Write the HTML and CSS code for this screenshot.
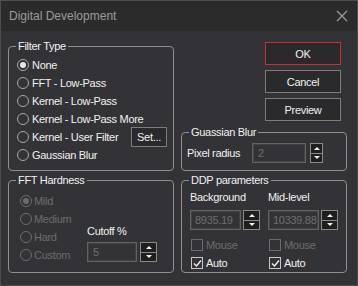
FILE: index.html
```html
<!DOCTYPE html>
<html lang="en">
<head>
    <meta charset="UTF-8">
    <title>Digital Development</title>
    <link rel="stylesheet" href="styles.css">
</head>
<body>
    <div class="window">
        <div class="titlebar">
            <span class="title">Digital Development</span>
            <svg class="close" width="12" height="12" viewBox="0 0 12 12">
                <path d="M1 1 L11 11 M11 1 L1 11" stroke="#9a9a9a" stroke-width="1.3" fill="none"/>
            </svg>
        </div>

        <div class="content">
            <fieldset class="group">
                <legend>Filter Type</legend>
                <div class="filter-body">
                    <div class="option"><span class="radio checked"></span>None</div>
                    <div class="option"><span class="radio"></span>FFT - Low-Pass</div>
                    <div class="option"><span class="radio"></span>Kernel - Low-Pass</div>
                    <div class="option"><span class="radio"></span>Kernel - Low-Pass More</div>
                    <div class="option"><span class="radio"></span>Kernel - User Filter<button class="btn set-btn">Set...</button></div>
                    <div class="option"><span class="radio"></span>Gaussian Blur</div>
                </div>
            </fieldset>

            <div class="side">
                <div class="actions">
                    <button class="btn action default">OK</button>
                    <button class="btn action">Cancel</button>
                    <button class="btn action">Preview</button>
                </div>
                <fieldset class="group blur">
                    <legend>Guassian Blur</legend>
                    <div class="blur-body">
                        <span class="label">Pixel radius</span>
                        <div class="field blur-field">2</div>
                        <div class="spin narrow"><span class="up"></span><span class="down"></span></div>
                    </div>
                </fieldset>
            </div>

            <fieldset class="group">
                <legend>FFT Hardness</legend>
                <div class="hardness-body">
                    <div class="hardness-options">
                        <div class="option disabled"><span class="radio checked"></span>Mild</div>
                        <div class="option disabled"><span class="radio"></span>Medium</div>
                        <div class="option disabled"><span class="radio"></span>Hard</div>
                        <div class="option disabled"><span class="radio"></span>Custom</div>
                    </div>
                    <div class="cutoff">
                        <span class="label">Cutoff %</span>
                        <div class="spin-row">
                            <div class="field cutoff-field">5</div>
                            <div class="spin"><span class="up"></span><span class="down"></span></div>
                        </div>
                    </div>
                </div>
            </fieldset>

            <fieldset class="group">
                <legend>DDP parameters</legend>
                <div class="ddp-body">
                    <div class="ddp-col">
                        <span class="label">Background</span>
                        <div class="spin-row">
                            <div class="field ddp-field">8935.19</div>
                            <div class="spin"><span class="up"></span><span class="down"></span></div>
                        </div>
                        <div class="check-row disabled"><span class="checkbox"></span>Mouse</div>
                        <div class="check-row"><span class="checkbox checked"><svg width="9" height="9" viewBox="0 0 9 9"><path d="M1 4.5 L3.5 7 L8 1.5" stroke="#f0f0f0" stroke-width="1.4" fill="none"/></svg></span>Auto</div>
                    </div>
                    <div class="ddp-col">
                        <span class="label">Mid-level</span>
                        <div class="spin-row">
                            <div class="field ddp-field">10339.88</div>
                            <div class="spin"><span class="up"></span><span class="down"></span></div>
                        </div>
                        <div class="check-row disabled"><span class="checkbox"></span>Mouse</div>
                        <div class="check-row"><span class="checkbox checked"><svg width="9" height="9" viewBox="0 0 9 9"><path d="M1 4.5 L3.5 7 L8 1.5" stroke="#f0f0f0" stroke-width="1.4" fill="none"/></svg></span>Auto</div>
                    </div>
                </div>
            </fieldset>
        </div>
    </div>
</body>
</html>
```

FILE: styles.css
```css
body {
    margin: 0;
    background-color: #333337;
    font-family: 'Liberation Sans', Arial, sans-serif;
    font-size: 11px;
    letter-spacing: -0.3px;
    color: #f1f1f1;
}
.window {
    width: 358px;
    height: 286px;
    box-sizing: border-box;
    border: 1px solid #4e4e50;
    background-color: #333337;
}
.titlebar {
    height: 30px;
    background-color: #2b2b2b;
    display: flex;
    align-items: center;
    justify-content: space-between;
    padding: 0 9px 0 8px;
}
.title {
    font-size: 12px;
    letter-spacing: 0;
    color: #9b9b9b;
}
.content {
    display: grid;
    grid-template-columns: 166px 166px;
    column-gap: 7px;
    row-gap: 2px;
    padding: 8px 0 0 7px;
}
.group {
    margin: 0;
    padding: 0;
    min-width: 0;
    border: 1px solid #8f8f8f;
    border-radius: 4px;
}
.group legend {
    margin-left: 7px;
    padding: 0 2px;
    line-height: 14px;
    color: #f1f1f1;
}
.option {
    display: flex;
    align-items: center;
    height: 18px;
}
.radio {
    width: 10px;
    height: 10px;
    border: 1px solid #a8a8a8;
    border-radius: 50%;
    margin-right: 3px;
    flex-shrink: 0;
    display: flex;
    align-items: center;
    justify-content: center;
}
.radio.checked::after {
    content: "";
    width: 6px;
    height: 6px;
    border-radius: 50%;
    background-color: #e8e8e8;
}
.option.disabled {
    color: #6c6c6c;
}
.option.disabled .radio {
    border-color: #6c6c6c;
}
.option.disabled .radio.checked::after {
    background-color: #6c6c6c;
}
.filter-body {
    padding: 3px 6px 6px 8px;
}
.btn {
    font-family: 'Liberation Sans', Arial, sans-serif;
    font-size: 11px;
    letter-spacing: -0.3px;
    color: #f1f1f1;
    background-color: #2a2a2c;
    border: 1px solid #7c7c7c;
    padding: 0;
}
.set-btn {
    margin-left: auto;
    width: 36px;
    height: 20px;
}
.side {
    display: flex;
    flex-direction: column;
}
.actions {
    display: flex;
    flex-direction: column;
    gap: 5px;
    padding: 3px 0 0 84px;
    margin-bottom: 4px;
}
.action {
    width: 76px;
    height: 23px;
}
.action.default {
    border-color: #c4303c;
}
.blur {
    flex: 1;
}
.blur-body {
    display: flex;
    align-items: center;
    padding: 4px 0 0 5px;
}
.label {
    line-height: 14px;
    color: #f1f1f1;
}
.field {
    height: 20px;
    box-sizing: border-box;
    border: 1px solid #626262;
    box-shadow: inset 0 0 0 1px #424245;
    color: #6e6e6e;
    line-height: 18px;
    padding-left: 5px;
    white-space: nowrap;
    overflow: hidden;
}
.blur-field {
    width: 54px;
    margin-left: auto;
}
.blur-body .spin {
    margin: 0 23px 0 4px;
}
.spin {
    width: 17px;
    height: 20px;
    box-sizing: border-box;
    border: 1px solid #8a8a8a;
    background-color: #1f1f20;
    display: flex;
    flex-direction: column;
    flex-shrink: 0;
}
.spin.narrow {
    width: 13px;
}
.spin span {
    flex: 1;
    display: flex;
    align-items: center;
    justify-content: center;
}
.spin .up {
    border-bottom: 1px solid #8a8a8a;
}
.spin .up::after {
    content: "";
    border-left: 3px solid transparent;
    border-right: 3px solid transparent;
    border-bottom: 3px solid #f0f0f0;
}
.spin .down::after {
    content: "";
    border-left: 3px solid transparent;
    border-right: 3px solid transparent;
    border-top: 3px solid #f0f0f0;
}
.hardness-body {
    display: flex;
    padding: 5px 0 0 11px;
}
.hardness-options {
    width: 67px;
}
.hardness-options .radio {
    margin-right: 2px;
}
.cutoff {
    align-self: flex-end;
    margin-bottom: 2px;
    display: flex;
    flex-direction: column;
    gap: 4px;
}
.spin-row {
    display: flex;
    gap: 2px;
}
.cutoff-field {
    width: 50px;
}
.cutoff .spin-row {
    gap: 3px;
}
.ddp-body {
    display: flex;
    padding: 3px 0 0 8px;
}
.ddp-col {
    width: 80px;
    display: flex;
    flex-direction: column;
}
.ddp-col .spin-row {
    margin-top: 6px;
    margin-bottom: 6px;
}
.ddp-field {
    width: 51px;
    padding-left: 4px;
}
.check-row {
    display: flex;
    align-items: center;
    height: 18px;
    padding-left: 1px;
}
.checkbox {
    width: 10px;
    height: 10px;
    border: 1px solid #c8c8c8;
    margin-right: 3px;
    display: flex;
    align-items: center;
    justify-content: center;
}
.check-row.disabled {
    color: #6c6c6c;
}
.check-row.disabled .checkbox {
    border-color: #6c6c6c;
}
```
